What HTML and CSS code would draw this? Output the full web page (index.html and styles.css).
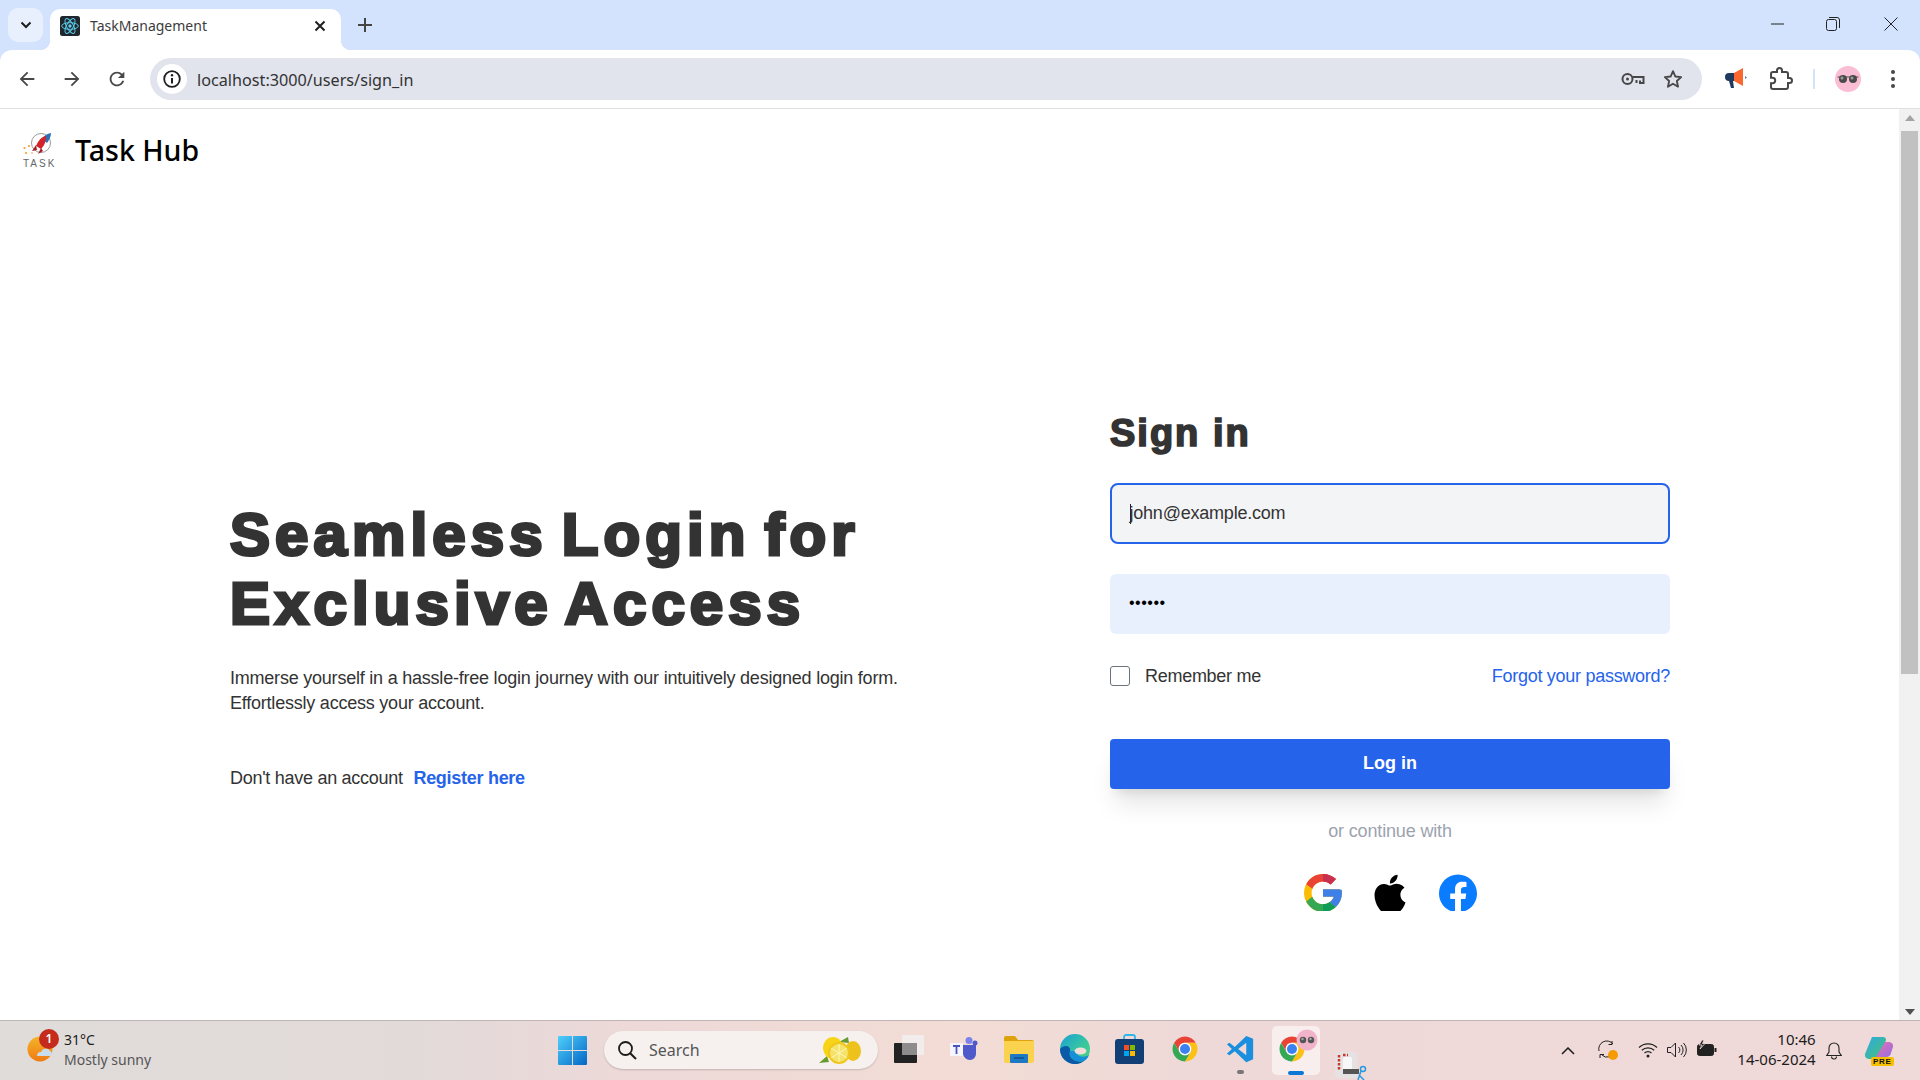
FILE: index.html
```html
<!DOCTYPE html>
<html lang="en">
<head>
<meta charset="utf-8">
<title>TaskManagement</title>
<link rel="stylesheet" href="styles.css">
</head>
<body>
<div class="screen">
  <header class="chrome">
    <div class="tabstrip">
      <button class="tab-search" aria-label="Search tabs"><svg viewBox="0 0 12 8" width="12" height="8"><path d="M1.5 1.5 6 6l4.5-4.5" fill="none" stroke="#1f1f1f" stroke-width="2"/></svg></button>
      <div class="tab">
        <svg class="favicon" viewBox="0 0 24 24" width="20" height="20"><rect width="24" height="24" rx="3" fill="#20272c"/><g fill="none" stroke="#5ed3f3" stroke-width="1.100"><ellipse cx="12" cy="12" rx="10" ry="4"/><ellipse cx="12" cy="12" rx="10" ry="4" transform="rotate(60 12 12)"/><ellipse cx="12" cy="12" rx="10" ry="4" transform="rotate(120 12 12)"/></g><circle cx="12" cy="12" r="2" fill="#5ed3f3"/></svg>
        <span class="tab-title">TaskManagement</span>
        <svg class="tab-close" viewBox="0 0 12 12" width="12" height="12"><path d="M1.5 1.5l9 9m0-9l-9 9" stroke="#1f1f1f" stroke-width="2"/></svg>
      </div>
      <svg class="new-tab" viewBox="0 0 14 14" width="14" height="14"><path d="M7 0v14M0 7h14" stroke="#444" stroke-width="2"/></svg>
      <div class="win-controls">
        <svg viewBox="0 0 14 14" width="14" height="14"><path d="M0 7h13" stroke="#222" stroke-width="1"/></svg>
        <svg viewBox="0 0 14 14" width="14" height="14"><rect x=".5" y="2.5" width="10" height="11" rx="2" fill="none" stroke="#222"/><path d="M3 .5h8a2.5 2.5 0 0 1 2.5 2.5v8" fill="none" stroke="#222"/></svg>
        <svg class="win-close" viewBox="0 0 14 14" width="14" height="14"><path d="M.5.5l13 13m0-13l-13 13" stroke="#222" stroke-width="1"/></svg>
      </div>
    </div>
    <div class="toolbar">
      <div class="nav-buttons">
        <svg viewBox="0 0 24 24" width="22" height="22"><path fill="#474747" d="M20 11H7.83l5.59-5.59L12 4l-8 8 8 8 1.41-1.41L7.83 13H20v-2z"/></svg>
        <svg viewBox="0 0 24 24" width="22" height="22"><path fill="#474747" d="M12 4l-1.41 1.41L16.17 11H4v2h12.17l-5.58 5.59L12 20l8-8z"/></svg>
        <svg viewBox="0 0 24 24" width="22" height="22"><path fill="#474747" d="M17.65 6.35C16.2 4.9 14.21 4 12 4c-4.42 0-7.99 3.58-7.99 8s3.57 8 7.99 8c3.73 0 6.84-2.55 7.73-6h-2.08c-.82 2.33-3.04 4-5.65 4-3.31 0-6-2.69-6-6s2.69-6 6-6c1.66 0 3.14.69 4.22 1.78L13 11h7V4l-2.35 2.35z"/></svg>
      </div>
      <div class="omnibox">
        <span class="site-info"><svg viewBox="0 0 20 20" width="20" height="20"><circle cx="10" cy="10" r="7.8" fill="none" stroke="#1f1f1f" stroke-width="1.8"/><path d="M10 9v5.5" stroke="#1f1f1f" stroke-width="2"/><circle cx="10" cy="6.3" r="1.2" fill="#1f1f1f"/></svg></span>
        <span class="url">localhost:3000/users/sign_in</span>
        <svg class="omni-key" viewBox="0 0 24 14" width="24" height="14"><circle cx="6.5" cy="7" r="5" fill="none" stroke="#474747" stroke-width="2"/><circle cx="6.5" cy="7" r="1.5" fill="#474747"/><path d="M11.5 5H22.500v6H19V8.500M15.500 11V8" fill="none" stroke="#474747" stroke-width="2"/></svg>
        <svg class="omni-star" viewBox="0 0 24 24" width="22" height="22"><path d="M12 3.500l2.600 5.800 6.300.700-4.700 4.200 1.300 6.200L12 17.200l-5.500 3.200 1.300-6.200L3.100 10l6.300-.7z" fill="none" stroke="#474747" stroke-width="2" stroke-linejoin="round"/></svg>
      </div>
      <div class="tool-icons">
        <svg class="ext-mega" viewBox="0 0 24 24" width="24" height="24"><path d="M1 10a4 4 0 0 1 4-4h7v8H5a4 4 0 0 1-4-4z" fill="#1f3a5f"/><path d="M5 14h4l1 7H7z" fill="#1f3a5f"/><path d="M10 6l9-5v18l-9-5z" fill="#f9682e"/><path d="M21 9l2 1.500-2 1.500z" fill="#5d7b99"/></svg>
        <svg class="ext-puzzle" viewBox="0 0 24 24" width="24" height="24"><path fill="none" stroke="#474747" stroke-width="2" d="M20.500 11H19V7c0-1.100-.9-2-2-2h-4V3.500C13 2.120 11.880 1 10.500 1S8 2.120 8 3.500V5H4c-1.100 0-1.990.9-1.990 2v3.800H3.500c1.490 0 2.700 1.210 2.700 2.700s-1.210 2.700-2.700 2.700H2V20c0 1.100.9 2 2 2h13c1.100 0 2-.9 2-2v-4h1.500c1.380 0 2.500-1.120 2.500-2.500S21.880 11 20.500 11z"/></svg>
        <span class="tool-divider"></span>
        <svg class="avatar" viewBox="0 0 26 26" width="26" height="26"><circle cx="13" cy="13" r="13" fill="#f9bdd4"/><path d="M2.500 11h21" stroke="#555" stroke-width="1"/><circle cx="8" cy="13" r="4" fill="#4a4a4a"/><circle cx="18" cy="13" r="4" fill="#4a4a4a"/><circle cx="7" cy="12" r="1.500" fill="#9a9a9a"/><circle cx="17" cy="12" r="1.500" fill="#9a9a9a"/></svg>
        <svg class="menu-dots" viewBox="0 0 4 18" width="4" height="18"><circle cx="2" cy="2" r="2" fill="#474747"/><circle cx="2" cy="9" r="2" fill="#474747"/><circle cx="2" cy="16" r="2" fill="#474747"/></svg>
      </div>
    </div>
  </header>

  <div class="viewport">
    <main class="page">
      <div class="brand">
        <svg class="brand-logo" viewBox="0 0 34 34" width="34" height="34">
          <circle cx="18" cy="10" r="9.500" fill="none" stroke="#8f8f8f" stroke-width=".9"/>
          <path d="M28 0c-4 .5-7 3-9 6l5 4c2-3 4-6 4-10z" fill="#2d6fb5"/>
          <path d="M23 3c-5 1-8 5-10 10l5 3c3-3 5-7 5-13z" fill="#d2232a"/>
          <path d="M13 12l-4 6 5-1zM18 15l-3 6 5-3z" fill="#a81c22"/>
          <circle cx="1.500" cy="15" r="1.100" fill="#f39c2d"/><circle cx="6" cy="13" r="1.100" fill="#f39c2d"/><circle cx="3" cy="20" r="1.100" fill="#f39c2d"/><circle cx="9" cy="20" r=".8" fill="#f39c2d"/>
          <text x="0" y="33.500" font-family="Liberation Sans, sans-serif" font-size="10" letter-spacing="2" fill="#666">TASK</text>
        </svg>
        <span class="brand-name">Task Hub</span>
      </div>
      <div class="hero">
        <section class="intro">
          <h1 class="intro-title">Seamless Login for<br>Exclusive Access</h1>
          <p class="intro-text">Immerse yourself in a hassle-free login journey with our intuitively designed login form.<br>Effortlessly access your account.</p>
          <p class="intro-register">Don't have an account <a class="register-link" href="#">Register here</a></p>
        </section>
        <form class="signin">
          <h2 class="signin-title">Sign in</h2>
          <div class="field field-focus"><span class="caret"></span><span>john@example.com</span></div>
          <div class="field field-filled"><span class="dots">••••••</span></div>
          <div class="form-row">
            <label class="remember"><span class="checkbox"></span>Remember me</label>
            <a class="forgot" href="#">Forgot your password?</a>
          </div>
          <button class="login" type="button">Log in</button>
          <p class="continue">or continue with</p>
          <div class="socials">
            <svg viewBox="4 4 40 39" width="38" height="37"><defs><clipPath id="rh"><rect x="24" y="0" width="24" height="48"/></clipPath></defs><path fill="#fbbc05" d="M43.600 20.500H42V20H24v8h11.300c-1.600 4.700-6.100 8-11.300 8-6.600 0-12-5.400-12-12s5.400-12 12-12c3.100 0 5.800 1.200 8 3l5.700-5.700C34 6.100 29.300 4 24 4 13 4 4 13 4 24s9 20 20 20 20-9 20-20c0-1.300-.1-2.400-.4-3.500z"/><path fill="#ea4335" d="M6.300 14.700l6.600 4.800C14.700 15.100 19 12 24 12c3.100 0 5.800 1.200 8 3l5.700-5.700C34 6.100 29.300 4 24 4 16.300 4 9.700 8.300 6.300 14.700z"/><path fill="#34a853" d="M24 44c5.200 0 9.900-2 13.400-5.200l-6.200-5.200C29.200 35.100 26.700 36 24 36c-5.200 0-9.600-3.300-11.300-7.900l-6.500 5C9.500 39.600 16.200 44 24 44z"/><g clip-path="url(#rh)"><path fill="#c9304f" d="M6.300 14.700l6.600 4.800C14.700 15.100 19 12 24 12c3.100 0 5.800 1.200 8 3l5.700-5.700C34 6.100 29.300 4 24 4 16.300 4 9.700 8.300 6.300 14.700z"/><path fill="#0f9d58" d="M24 44c5.200 0 9.900-2 13.400-5.200l-6.200-5.200C29.200 35.100 26.700 36 24 36c-5.200 0-9.600-3.300-11.300-7.900l-6.500 5C9.500 39.600 16.200 44 24 44z"/></g><path fill="#3f7fe8" d="M43.600 20.500H42V20H24v8h11.300c-.8 2.200-2.200 4.200-4.100 5.600l6.200 5.200C36.900 39.200 44 34 44 24c0-1.300-.1-2.400-.4-3.500z"/></svg>
            <svg viewBox="0 0 24 22.500" width="38" height="37"><path fill="#000" d="M12.152 6.896c-.948 0-2.415-1.078-3.960-1.040-2.040.027-3.910 1.183-4.961 3.014-2.117 3.675-.546 9.103 1.519 12.090 1.013 1.454 2.208 3.090 3.792 3.039 1.520-.065 2.090-.987 3.935-.987 1.831 0 2.350.987 3.960.948 1.637-.026 2.676-1.480 3.676-2.948 1.156-1.688 1.636-3.325 1.662-3.415-.039-.013-3.182-1.221-3.220-4.857-.026-3.040 2.480-4.494 2.597-4.559-1.429-2.090-3.623-2.324-4.390-2.376-2-.156-3.675 1.090-4.610 1.090zM15.530 3.830c.843-1.012 1.400-2.427 1.245-3.830-1.207.052-2.662.805-3.532 1.818-.78.896-1.454 2.338-1.273 3.714 1.338.104 2.715-.688 3.559-1.701"/></svg>
            <svg viewBox="0 0 24 23" width="38" height="37"><path fill="#0a7cff" d="M24 12.073c0-6.627-5.373-12-12-12s-12 5.373-12 12c0 5.990 4.388 10.954 10.125 11.854v-8.385H7.078v-3.470h3.047V9.430c0-3.007 1.792-4.669 4.533-4.669 1.312 0 2.686.235 2.686.235v2.953H15.830c-1.491 0-1.956.925-1.956 1.874v2.250h3.328l-.532 3.470h-2.796v8.385C19.612 23.027 24 18.062 24 12.073z"/></svg>
          </div>
        </form>
      </div>
    </main>
    <aside class="scrollbar">
      <span class="arrow-up"></span>
      <span class="thumb"></span>
      <span class="arrow-down"></span>
    </aside>
  </div>

  <footer class="taskbar">
    <div class="weather">
      <span class="weather-icon">
        <svg viewBox="0 0 30 28" width="30" height="28"><defs><linearGradient id="sun" x1="0" y1="0" x2="0" y2="1"><stop offset="0" stop-color="#f4b52a"/><stop offset="1" stop-color="#f07a12"/></linearGradient></defs><circle cx="14" cy="13" r="12.500" fill="url(#sun)"/><path d="M11 20a4 4 0 0 1 4-4 5 5 0 0 1 9-1 3 3 0 0 1 1 5z" fill="#c9dcec"/></svg>
        <span class="weather-badge">1</span>
      </span>
      <div class="weather-text"><span class="temp">31°C</span><span class="cond">Mostly sunny</span></div>
    </div>
    <svg class="win-logo" viewBox="0 0 29 29" width="29" height="29" preserveAspectRatio="none"><defs><linearGradient id="wl" x1="0" y1="0" x2="1" y2="1"><stop offset="0" stop-color="#4fd0fb"/><stop offset="1" stop-color="#0366c6"/></linearGradient></defs><path fill="url(#wl)" d="M0 1a1 1 0 0 1 1-1h13v14H0zM15 0h13a1 1 0 0 1 1 1v13H15zM0 15h14v14H1a1 1 0 0 1-1-1zM15 15h14v13a1 1 0 0 1-1 1H15z"/></svg>
    <div class="search-pill">
      <svg viewBox="0 0 20 20" width="20" height="20"><circle cx="8.500" cy="8.500" r="6.500" fill="none" stroke="#1c1c1c" stroke-width="1.800"/><path d="M13.200 13.200 19 19" stroke="#1c1c1c" stroke-width="2"/></svg>
      <span class="search-label">Search</span>
      <svg class="lemons" viewBox="0 0 44 28" width="44" height="28"><path d="M0 27l8-7 2 6zM20 6l9-5 1 6z" fill="#6a9a2e"/><ellipse cx="34" cy="15" rx="8" ry="10" fill="#eec21c"/><ellipse cx="14" cy="12" rx="10" ry="11" fill="#f7d417"/><circle cx="20" cy="17" r="10" fill="#f4e26a" stroke="#f0c71a" stroke-width="2"/><path d="M20 8v18M12 12l16 10M28 12L12 22" stroke="#fff6b8" stroke-width="1"/></svg>
    </div>
    <div class="task-apps">
      <span class="app"><svg viewBox="0 0 30 28" width="30" height="28"><rect x="0" y="8" width="23" height="20" rx="1" fill="#222"/><rect x="8" y="0" width="22" height="20" rx="1" fill="#f2eeee" opacity=".9"/><rect x="8" y="8" width="15" height="12" fill="#8d8b8b"/></svg></span>
      <span class="app"><svg viewBox="0 0 28 24" width="28" height="24"><circle cx="19" cy="3.500" r="3.500" fill="#7b83eb"/><path d="M11 8h15v9a6 6 0 0 1-6 6 7 7 0 0 1-7-6z" fill="#5059c9"/><circle cx="25" cy="6" r="2.500" fill="#5059c9"/><rect x="0" y="6" width="13" height="13" rx="1" fill="#f5f5ff"/><path d="M3 9h7M6.500 9v8" stroke="#4b53bc" stroke-width="1.800"/></svg></span>
      <span class="app"><svg viewBox="0 0 30 27" width="30" height="27"><path d="M0 2a2 2 0 0 1 2-2h9l3 4h14a2 2 0 0 1 2 2v2H0z" fill="#dea20c"/><path d="M0 5h30v20a2 2 0 0 1-2 2H2a2 2 0 0 1-2-2z" fill="#fbd24d"/><rect x="6" y="18" width="18" height="9" rx="1" fill="#1d79c4"/><path d="M10 22h10" stroke="#0e4f8f" stroke-width="1.500"/></svg></span>
      <span class="app"><svg viewBox="0 0 30 30" width="30" height="30"><defs><linearGradient id="eg" x1="0" y1="0" x2="1" y2="1"><stop offset="0" stop-color="#1b9fd8"/><stop offset=".55" stop-color="#36c6a0"/><stop offset="1" stop-color="#4fd67c"/></linearGradient></defs><circle cx="15" cy="15" r="15" fill="url(#eg)"/><path d="M0 15A15 15 0 0 0 24 27C15 29 8 24 10 17 11 12 5 10 0 15z" fill="#0b5aa8"/><path d="M10 17C8 24 15 29 24 27c2-1 4-3 5-6-5 3-13 2-13-4z" fill="#1590d8"/><ellipse cx="20.500" cy="17" rx="6" ry="3.500" fill="#f2dcd8"/></svg></span>
      <span class="app"><svg viewBox="0 0 29 30" width="29" height="30"><path d="M9 7V3a2 2 0 0 1 2-2h7a2 2 0 0 1 2 2v4" fill="none" stroke="#2fb6e8" stroke-width="1.800"/><rect x="0" y="5" width="29" height="25" rx="3" fill="#123f75"/><rect x="9" y="11" width="5" height="5" fill="#f25022"/><rect x="15" y="11" width="5" height="5" fill="#7fba00"/><rect x="9" y="17" width="5" height="5" fill="#00a4ef"/><rect x="15" y="17" width="5" height="5" fill="#ffb900"/></svg></span>
      <span class="app"><svg viewBox="0 0 48 48" width="30" height="30"><path fill="#e94335" d="M41.320 14A20 20 0 0 0 6.680 14L15.340 29A10 10 0 0 1 24 14z"/><path fill="#fbc116" d="M41.320 14A20 20 0 0 1 24 44L32.660 29A10 10 0 0 0 24 14z"/><path fill="#34a853" d="M6.680 14A20 20 0 0 0 24 44L32.660 29A10 10 0 0 1 15.340 29z"/><circle cx="24" cy="24" r="10" fill="#fff"/><circle cx="24" cy="24" r="8" fill="#3b82f0"/></svg></span>
      <span class="app app-code"><svg viewBox="0 0 24 24" width="30" height="30"><path fill="#1a8fdd" d="M17 1.500 7.800 10.300 3.600 7 1.500 8.200 5.500 12l-4 3.800L3.600 17l4.200-3.300L17 22.500l5.500-2.300V3.800zM17 7v10l-6.500-5z" fill-rule="evenodd"/></svg><i class="app-dot"></i></span>
      <span class="app app-active"><svg viewBox="0 0 48 48" width="30" height="30"><path fill="#e94335" d="M41.320 14A20 20 0 0 0 6.680 14L15.340 29A10 10 0 0 1 24 14z"/><path fill="#fbc116" d="M41.320 14A20 20 0 0 1 24 44L32.660 29A10 10 0 0 0 24 14z"/><path fill="#34a853" d="M6.680 14A20 20 0 0 0 24 44L32.660 29A10 10 0 0 1 15.340 29z"/><circle cx="24" cy="24" r="10" fill="#fff"/><circle cx="24" cy="24" r="8" fill="#3b82f0"/></svg>
        <svg class="chrome-badge" viewBox="0 0 22 22" width="22" height="22"><circle cx="11" cy="11" r="10.500" fill="#f0b3ca"/><circle cx="7" cy="11" r="3.200" fill="#555"/><circle cx="15" cy="11" r="3.200" fill="#555"/><circle cx="6.500" cy="10" r="1.200" fill="#aaa"/><circle cx="14.500" cy="10" r="1.200" fill="#aaa"/></svg>
        <i class="app-bar"></i></span>
      <span class="app app-snip"><svg viewBox="0 0 32 28" width="32" height="28"><rect x="0" y="0" width="22" height="26" rx="3" fill="#e4e2e2"/><path d="M4 3v16M8 3h5" stroke="#d0352b" stroke-width="2.500" stroke-dasharray="2.500 1.500"/><rect x="8" y="5" width="9" height="16" rx="2" fill="#f7f7f7"/><rect x="8" y="17" width="16" height="5" fill="#555"/><circle cx="28" cy="17" r="2.500" fill="none" stroke="#2a9ae0" stroke-width="1.500"/><path d="M26 19l-3 9M24 23l5 5" stroke="#2a9ae0" stroke-width="1.500"/></svg></span>
    </div>
    <div class="tray">
      <svg class="tray-chevron" viewBox="0 0 14 8" width="14" height="8"><path d="M1 7l6-6 6 6" fill="none" stroke="#1c1c1c" stroke-width="1.500"/></svg>
      <svg class="tray-sync" viewBox="0 0 20 20" width="20" height="20"><path d="M1 11a8 8 0 0 1 14-7M14 1v3.500h-3.500M16 11a7 7 0 0 1-12 4M2 18v-3.500h4" fill="none" stroke="#222" stroke-width="1"/><circle cx="15" cy="15" r="5" fill="#f59b00"/></svg>
      <svg class="tray-wifi" viewBox="0 0 20 16" width="20" height="16"><path d="M1 5.500a13 13 0 0 1 18 0M3.800 8.300a9 9 0 0 1 12.400 0M6.500 11a5 5 0 0 1 7 0" fill="none" stroke="#222" stroke-width="1.200"/><circle cx="10" cy="14" r="1.500" fill="#222"/></svg>
      <svg class="tray-volume" viewBox="0 0 20 16" width="20" height="16"><path d="M.5 5.500h3.500L8.500 1v14L4 10.500H.5z" fill="none" stroke="#222"/><path d="M11.500 5a4 4 0 0 1 0 6M14 3a7 7 0 0 1 0 10M16.500 1a10 10 0 0 1 0 14" fill="none" stroke="#222"/></svg>
      <svg class="tray-battery" viewBox="0 0 20 17" width="20" height="17"><rect x=".5" y="4.500" width="16" height="11" rx="2" fill="#222" stroke="#222"/><rect x="17.500" y="8" width="2" height="4" fill="#222"/><path d="M5 0 2 5h3L3 9l5-5.500H5.500L7 0z" fill="#222" stroke="#f1dada" stroke-width=".8"/></svg>
      <div class="clock"><span>10:46</span><span>14-06-2024</span></div>
      <svg class="tray-bell" viewBox="0 0 16 18" width="16" height="18"><path d="M8 1a5 5 0 0 0-5 5v4l-2.300 3.500h14.600L13 10V6a5 5 0 0 0-5-5zM5.500 14.500a2.500 2.500 0 0 0 5 0" fill="none" stroke="#222" stroke-width="1.100"/></svg>
      <span class="copilot"><svg viewBox="0 0 28 22" width="28" height="22"><defs><linearGradient id="cp1" x1="0" y1="0" x2="1" y2="1"><stop offset="0" stop-color="#2fa8e8"/><stop offset="1" stop-color="#46c46e"/></linearGradient><linearGradient id="cp2" x1="0" y1="0" x2="1" y2="1"><stop offset="0" stop-color="#f06fb2"/><stop offset="1" stop-color="#8f6fe0"/></linearGradient></defs><path d="M7 0h11a3 3 0 0 1 3 3L14 22H4a4 4 0 0 1-4-5z" fill="url(#cp1)"/><path d="M20 5h4a4 4 0 0 1 4 5l-2 6a5 5 0 0 1-5 4H11z" fill="url(#cp2)"/></svg><span class="pre">PRE</span></span>
    </div>
  </footer>
</div>
</body>
</html>
```

FILE: styles.css
```css
* { box-sizing: border-box; }
html, body { margin: 0; padding: 0; height: 100%; overflow: hidden; }
body { font-family: "Liberation Sans", Arial, sans-serif; background: #fff; }
svg { display: block; flex: none; }
.screen { width: 1920px; height: 1080px; display: flex; flex-direction: column; }

/* browser chrome */
.chrome { height: 109px; background: #d3e3fd; flex: none; display: flex; flex-direction: column; font-family: "Noto Sans", sans-serif; }
.tabstrip { height: 50px; display: flex; align-items: flex-start; }
.tab-search { width: 35px; height: 34px; margin: 8px 0 0 8px; border: 0; padding: 0; background: #e8f0fd; border-radius: 10px; display: flex; align-items: center; justify-content: center; }
.tab { position: relative; width: 291px; height: 41px; margin: 9px 0 0 7px; background: #fff; border-radius: 10px 10px 0 0; display: flex; align-items: center; padding: 0 15px 8px 10px; }
.tab::before, .tab::after { content: ""; position: absolute; bottom: 0; width: 10px; height: 10px; }
.tab::before { left: -10px; background: radial-gradient(circle at 0 0, #d3e3fd 10px, #fff 10.5px); }
.tab::after { right: -10px; background: radial-gradient(circle at 100% 0, #d3e3fd 10px, #fff 10.5px); }
.tab-title { margin-left: 10px; font-size: 14px; color: #3c3c3c; flex: 1; }
.new-tab { margin: 18px 0 0 17px; }
.win-controls { margin-left: auto; display: flex; gap: 41px; padding: 17px 22px 0 0; }
.win-close { margin-left: 3px; }
.toolbar { height: 59px; background: #fff; border-radius: 12px 12px 0 0; border-bottom: 1px solid #e0e0e0; display: flex; align-items: flex-start; position: relative; }
.nav-buttons { display: flex; gap: 23px; padding: 18px 0 0 16px; width: 150px; }
.omnibox { width: 1552px; height: 42px; margin-top: 8px; background: #e1e3ed; border-radius: 21px; display: flex; align-items: center; padding: 0 18px 0 7px; }
.site-info { width: 30px; height: 30px; border-radius: 50%; background: #fff; display: flex; align-items: center; justify-content: center; flex: none; }
.url { margin-left: 10px; font-size: 16.200px; color: #333; flex: 1; padding-top: 1px; }
.omni-key { margin-right: 17px; }
.tool-icons { display: flex; align-items: center; height: 42px; margin-top: 8px; padding-left: 22px; flex: 1; }
.ext-mega { margin-right: 21px; }
.ext-puzzle { margin-right: 20px; }
.tool-divider { width: 2px; height: 20px; background: #d3e3fd; margin-right: 20px; }
.avatar { margin-right: 30px; }

/* page */
.viewport { flex: 1; display: flex; min-height: 0; }
.page { flex: 1; min-width: 0; display: flex; flex-direction: column; }
.brand { display: flex; align-items: center; padding: 23px 0 0 23px; }
.brand-logo { overflow: hidden; }
.brand-name { margin-left: 18px; font-family: "Noto Sans", sans-serif; font-size: 28.500px; line-height: 36px; color: #000; font-weight: 500; }
.hero { display: flex; padding-left: 230px; }
.intro { width: 880px; padding-top: 332px; }
.intro-title { margin: 0; font-size: 60px; line-height: 69px; font-weight: 700; color: #333; letter-spacing: 5.100px; word-spacing: -7.800px; -webkit-text-stroke: 3.200px #333; }
.intro-text { margin: 28px 0 0; font-size: 18px; line-height: 25px; color: #333; letter-spacing: -.22px; }
.intro-register { margin: 50px 0 0; font-size: 18px; line-height: 25px; color: #333; letter-spacing: -.28px; }
.register-link { margin-left: 6px; color: #2563eb; font-weight: 700; text-decoration: none; }

.signin { width: 560px; padding-top: 243px; display: flex; flex-direction: column; }
.signin-title { margin: 0; font-size: 38px; line-height: 44px; font-weight: 700; color: #333; letter-spacing: 2px; -webkit-text-stroke: 1.700px #333; }
.field { height: 60px; border-radius: 6px; display: flex; align-items: center; padding: 0 19px; font-size: 18px; color: #333; letter-spacing: -.22px; }
.field-focus { height: 61px; margin-top: 28px; background: #f3f4f6; border: 2.500px solid #2563eb; border-radius: 8px; padding: 0 17.500px; }
.caret { width: 1px; height: 20px; background: #222; margin-right: -1px; }
.field-filled { margin-top: 30px; background: #e8f0fe; }
.dots { font-size: 16px; color: #000; letter-spacing: .5px; margin-top: -3px; }
.form-row { margin-top: 31px; height: 22px; display: flex; justify-content: space-between; align-items: center; font-size: 18px; letter-spacing: -.28px; }
.remember { display: flex; align-items: center; color: #333; }
.checkbox { width: 20px; height: 20px; border: 1.500px solid #6b7280; border-radius: 3px; margin-right: 15px; background: #fff; }
.forgot { color: #2563eb; text-decoration: none; }
.login { margin-top: 52px; height: 50px; border: 0; border-radius: 4px; background: #2563eb; color: #fff; font: 700 18px "Liberation Sans", Arial, sans-serif; padding: 0 0 2px; box-shadow: 0 20px 25px -5px rgba(0,0,0,.1), 0 8px 10px -6px rgba(0,0,0,.1); }
.continue { margin: 30px 0 0; text-align: center; font-size: 18px; line-height: 24px; color: #9ca3af; letter-spacing: -.15px; }
.socials { margin-top: 31px; display: flex; justify-content: center; gap: 29.500px; }
.socials svg { overflow: hidden; }

/* scrollbar */
.scrollbar { width: 21px; flex: none; background: #f1f1f1; display: flex; flex-direction: column; align-items: center; position: relative; }
.arrow-up { margin-top: 6px; width: 0; height: 0; border: 5px solid transparent; border-top: 0; border-bottom: 6px solid #a3a3a3; }
.thumb { margin-top: 10px; width: 17px; height: 543px; background: #c1c1c1; }
.arrow-down { margin-top: auto; margin-bottom: 5px; width: 0; height: 0; border: 5px solid transparent; border-bottom: 0; border-top: 6px solid #505050; }

/* taskbar */
.taskbar { height: 60px; flex: none; border-top: 1px solid #c0b5b5; background: linear-gradient(90deg, #dfdcda 0%, #e2dad9 22%, #ecd9d8 32%, #f3dcd5 50%, #eed9d8 62%, #efd9d9 100%); display: flex; align-items: flex-start; font-family: "Noto Sans", sans-serif; color: #1c1c1c; }
.weather { width: 558px; display: flex; padding: 9px 0 0 26px; position: relative; }
.weather-icon { position: relative; width: 30px; height: 28px; margin-top: 6px; flex: none; }
.weather-badge { position: absolute; left: 13px; top: -7px; width: 20px; height: 20px; border-radius: 50%; background: #c42b1c; color: #fff; font-size: 12px; font-weight: 600; line-height: 20px; text-align: center; }
.weather-text { display: flex; flex-direction: column; margin-left: 8px; font-size: 14px; line-height: 20px; }
.temp { color: #1c1c1c; }
.cond { color: #555; }
.win-logo { margin-top: 15px; }
.search-pill { width: 274px; height: 38px; margin: 10px 0 0 17px; background: #f6f1ef; border-radius: 19px; display: flex; align-items: center; padding: 0 15px 0 13px; box-shadow: 0 1px 2px rgba(0,0,0,.18); }
.search-label { margin-left: 12px; font-size: 16px; color: #555; flex: 1; }
.task-apps { display: flex; margin-left: 3px; }
.app { width: 55.300px; height: 59px; display: flex; align-items: center; justify-content: center; position: relative; padding-bottom: 3px; }
.app-dot { position: absolute; left: 24px; bottom: 6px; width: 7px; height: 4px; border-radius: 2px; background: #777; }
.app-active::before { content: ""; position: absolute; left: 4px; right: 3px; top: 5px; bottom: 5px; border-radius: 5px; background: rgba(255,255,255,.55); }
.app-active svg { position: relative; left: -4px; }
.app-active .chrome-badge { position: absolute; left: 28px; top: 8px; }
.app-bar { position: absolute; left: 20px; bottom: 5px; width: 16px; height: 4px; border-radius: 2px; background: #0a78d4; }
.app-snip { align-items: flex-end; padding: 0; }
.tray { flex: 1; display: flex; align-items: flex-start; padding-left: 182px; }
.tray-chevron { margin: 26px 0 0 0; }
.tray-sync { margin: 19px 0 0 23px; }
.tray-wifi { margin: 21px 0 0 20px; }
.tray-volume { margin: 21px 0 0 9px; }
.tray-battery { margin: 19px 0 0 10px; }
.clock { width: 99px; display: flex; flex-direction: column; align-items: flex-end; font-size: 15px; line-height: 20px; margin-top: 8px; }
.tray-bell { margin: 21px 0 0 10px; }
.copilot { position: relative; margin: 16px 0 0 23px; width: 29px; height: 29px; }
.pre { position: absolute; left: 6px; top: 20px; width: 23px; height: 9px; border-radius: 2px; background: #f6c000; color: #111; font: 700 8px/9px "Liberation Sans", sans-serif; letter-spacing: .7px; text-align: center; }
```
